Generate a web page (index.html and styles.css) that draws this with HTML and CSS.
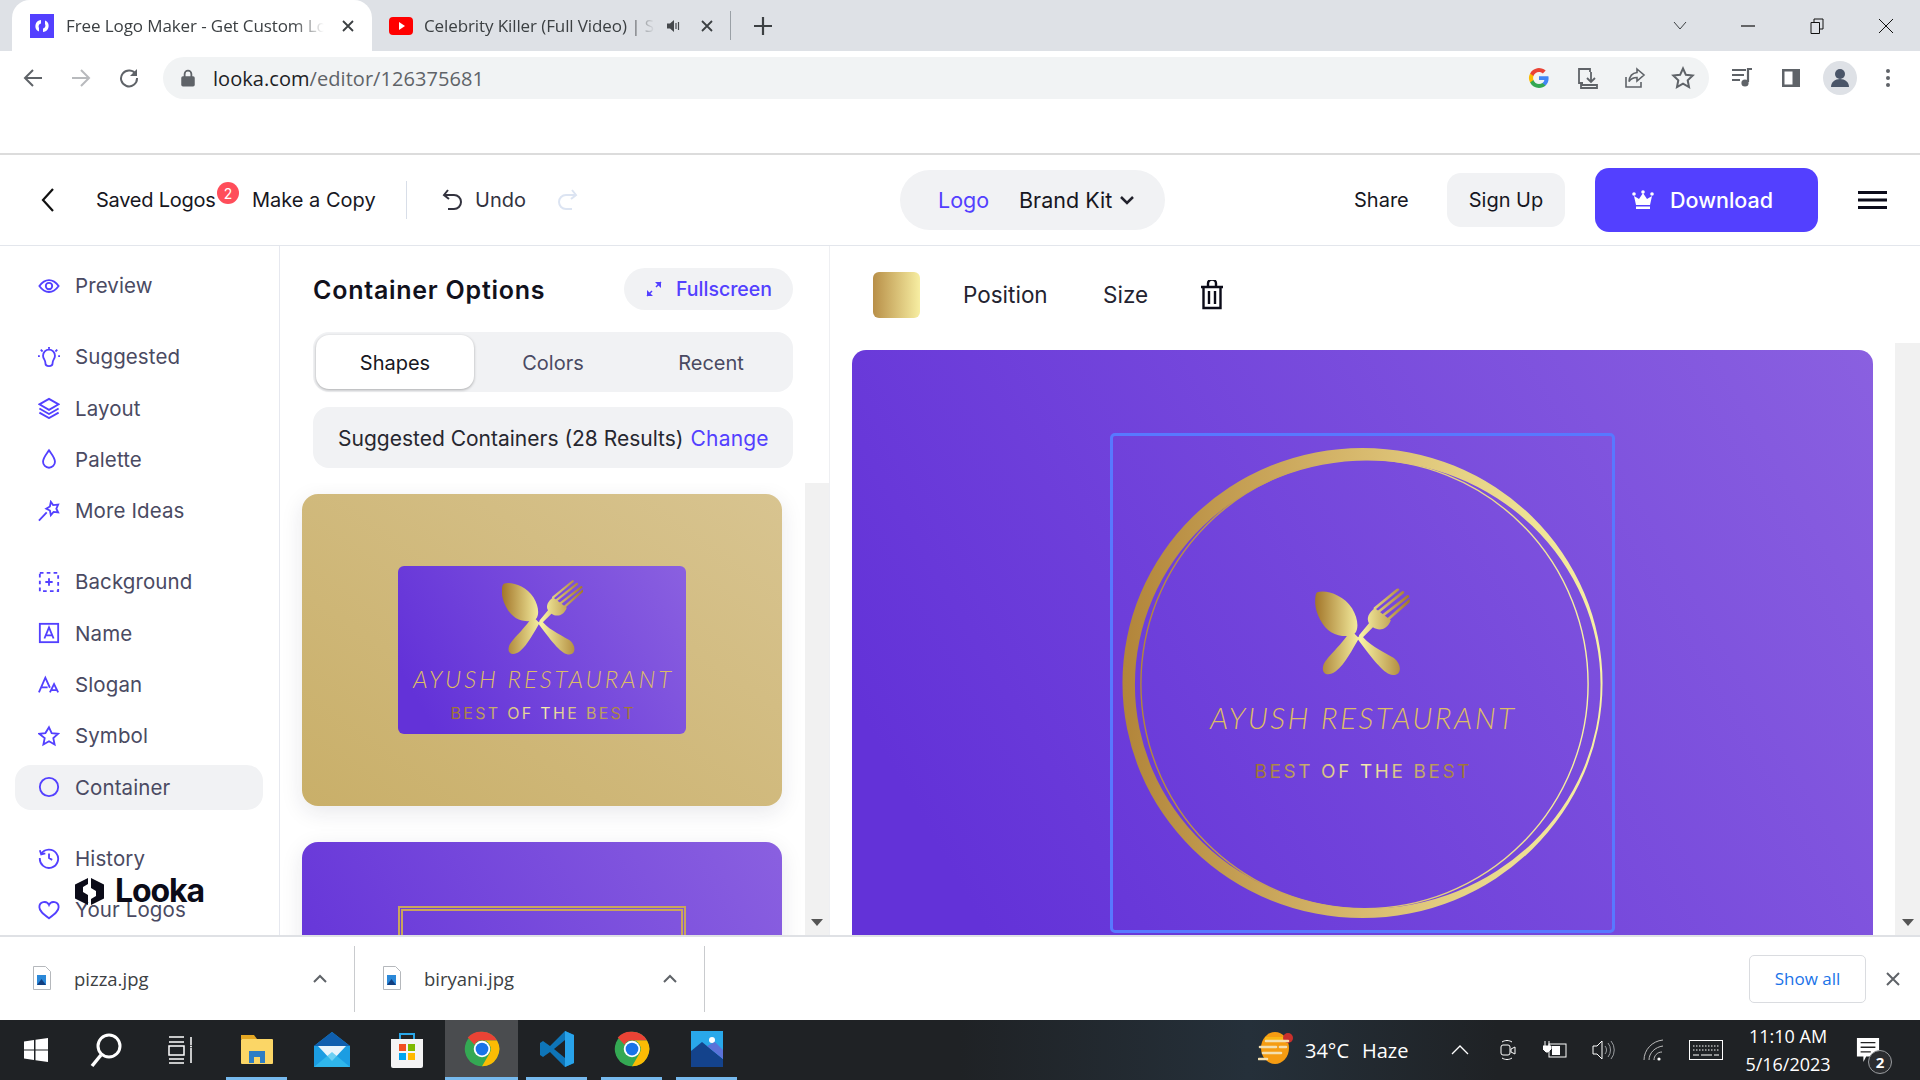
FILE: index.html
```html
<!DOCTYPE html>
<html lang="en">
<head>
<meta charset="utf-8">
<title>Free Logo Maker - Get Custom Logo Designs</title>
<link rel="stylesheet" href="styles.css">
</head>
<body>
<svg class="defs" width="0" height="0" aria-hidden="true">
  <defs>
    <linearGradient id="gold" gradientUnits="userSpaceOnUse" x1="0" y1="0" x2="95" y2="0">
      <stop offset="0" stop-color="#a3762a"/><stop offset=".48" stop-color="#f8f3a4"/><stop offset="1" stop-color="#a3762a"/>
    </linearGradient>
    <linearGradient id="ring" x1="0" y1="0" x2="1" y2="0">
      <stop offset="0" stop-color="#b2853a"/><stop offset=".5" stop-color="#d8ba6e"/><stop offset="1" stop-color="#f8f2a4"/>
    </linearGradient>
    <linearGradient id="slogan" x1="0" y1="0" x2="1" y2="0">
      <stop offset="0" stop-color="#9c7030"/><stop offset=".5" stop-color="#f8efb0"/><stop offset="1" stop-color="#9c7030"/>
    </linearGradient>
    <symbol id="cutlery" viewBox="0 0 95 87">
      <g fill="url(#gold)">
        <path d="M2 4C10 1 28 6 37 20c6 10 7 20 3 25-4 4-15 4-24-1C6 38-2 20 0 9c.5-3 1-4 2-5z"/>
        <path d="M36 42l8 8C38 60 30 76 21 83c-8 6-15 3-13-5 2-8 16-18 28-36z"/>
        <path d="M60 20c-6 4-9 10-6 15l-10 12 1 5 13-13c6 4 14 3 18-7z"/>
        <path d="M42 50l4-4C52 56 66 62 79 70c8 6 8 17 0 17-9 0-19-13-37-37z"/>
      </g>
      <g stroke="url(#gold)" stroke-width="2.600" stroke-linecap="round" fill="none">
        <path d="M60 20 83 1M63 24 88 4M67 28 93 8M71 33 95 12"/>
      </g>
    </symbol>
    <symbol id="chrome" viewBox="0 0 48 48">
      <circle cx="24" cy="24" r="23" fill="#34a853"/>
      <path d="M24 1a23 23 0 0 1 20 11.500H24a11.500 11.500 0 0 0-10 5.800L5 8.500A23 23 0 0 1 24 1z" fill="#ea4335"/>
      <path d="M44 12.500a23 23 0 0 1-20 34.500L34 30a11.500 11.500 0 0 0-10-17.500z" fill="#fbbc04"/>
      <circle cx="24" cy="24" r="11" fill="#fff"/><circle cx="24" cy="24" r="8.500" fill="#1a73e8"/>
    </symbol>
    <symbol id="file" viewBox="0 0 18 24">
      <path d="M.5.500h12l5 5v18H.5z" fill="#fff" stroke="#b5b8bc"/><rect x="4" y="9" width="9" height="10" fill="#2b88d8"/><path d="M4 19l4.500-6 4.500 6z" fill="#123f80"/>
    </symbol>
  </defs>
</svg>

<div class="tabstrip">
  <div class="tab tab-active">
    <svg class="fav" viewBox="0 0 24 24"><rect width="24" height="24" fill="#5340ff"/><path d="M11 6a6 6 0 0 0-2 11.500v-3.500a3 3 0 0 1 2-4.500zM13 18a6 6 0 0 0 2-11.500V10a3 3 0 0 1-2 4.500z" fill="#fff"/></svg>
    <span class="tab-title">Free Logo Maker - Get Custom Logo Designs</span>
    <svg class="tab-x" viewBox="0 0 12 12"><path d="M1 1l10 10M11 1 1 11" stroke="#3c4043" stroke-width="1.800"/></svg>
  </div>
  <div class="tab tab-second">
    <svg class="fav fav-yt" viewBox="0 0 24 18"><rect width="24" height="18" rx="4" fill="#f00"/><path d="M10 5l6 4-6 4z" fill="#fff"/></svg>
    <span class="tab-title tab-title-short">Celebrity Killer (Full Video) | Saga</span>
    <svg class="tab-sound" viewBox="0 0 16 14"><path d="M1 4.500h3L8 1v12L4 9.500H1z" fill="#45484c"/><path d="M10 4v6M12.500 3v8" stroke="#45484c" stroke-width="1.200"/></svg>
    <svg class="tab-x" viewBox="0 0 12 12"><path d="M1 1l10 10M11 1 1 11" stroke="#3c4043" stroke-width="1.800"/></svg>
  </div>
  <span class="tab-sep"></span>
  <svg class="tab-plus" viewBox="0 0 18 18"><path d="M9 0v18M0 9h18" stroke="#3c4043" stroke-width="2.200"/></svg>
  <div class="win-controls">
    <svg class="wc wc-chev" viewBox="0 0 14 10"><path d="M1 1l6 7 6-7" stroke="#3c4043" fill="none"/></svg>
    <svg class="wc" viewBox="0 0 16 16"><path d="M1 8h14" stroke="#111" stroke-width="1.200"/></svg>
    <svg class="wc" viewBox="0 0 16 16"><path d="M2 4.500h8.500v11H2zM5 4.500V1h9v10h-3.500" stroke="#111" fill="none"/></svg>
    <svg class="wc" viewBox="0 0 16 16"><path d="M1 1l14 14M15 1 1 15" stroke="#111"/></svg>
  </div>
</div>

<div class="toolbar">
  <svg class="nav-ic" viewBox="0 0 20 20"><path d="M19 10H2M10 2l-8 8 8 8" stroke="#5f6368" stroke-width="2" fill="none"/></svg>
  <svg class="nav-ic" viewBox="0 0 20 20"><path d="M1 10h17M10 2l8 8-8 8" stroke="#b8babd" stroke-width="2" fill="none"/></svg>
  <svg class="nav-ic" viewBox="0 0 20 20"><path d="M17 6.500A8 8 0 1 0 18 10" stroke="#5f6368" stroke-width="2" fill="none"/><path d="M18 1v7h-7z" fill="#5f6368"/></svg>
  <div class="omnibox">
    <svg class="lock" viewBox="0 0 12 16"><path d="M3 7V4.500a3 3 0 0 1 6 0V7" stroke="#5f6368" stroke-width="1.600" fill="none"/><rect y="6.500" width="12" height="9" rx="1.500" fill="#5f6368"/></svg>
    <span class="url"><b>looka.com</b>/editor/126375681</span>
    <span class="omni-fill"></span>
    <svg class="omni-ic" viewBox="0 0 24 24"><path d="M21.600 12.200c0-.7-.1-1.400-.2-2H12v3.800h5.400a4.600 4.600 0 0 1-2 3v2.500h3.200c1.900-1.700 3-4.300 3-7.300z" fill="#4285f4"/><path d="M12 22c2.700 0 5-.9 6.600-2.400l-3.200-2.500c-.9.600-2 1-3.400 1-2.600 0-4.800-1.800-5.600-4.100H3.100v2.600A10 10 0 0 0 12 22z" fill="#34a853"/><path d="M6.400 14a6 6 0 0 1 0-3.900V7.400H3.100a10 10 0 0 0 0 9.200z" fill="#fbbc04"/><path d="M12 6c1.500 0 2.800.5 3.800 1.500l2.900-2.900A10 10 0 0 0 3.100 7.400l3.300 2.600C7.200 7.800 9.400 6 12 6z" fill="#ea4335"/></svg>
    <svg class="omni-ic" viewBox="0 0 24 24"><path d="M8 17H4V3h11v3" stroke="#5f6368" stroke-width="1.800" fill="none"/><path d="M16 6v10M12 12l4 4 4-4M6 19h16v3H6z" stroke="#5f6368" stroke-width="1.800" fill="none"/></svg>
    <svg class="omni-ic" viewBox="0 0 24 24"><path d="M3 11v10h15v-5" stroke="#5f6368" stroke-width="1.600" fill="none"/><path d="M14 3l7 6-7 6v-3.500c-4 0-6 1-8 4 .5-5 3-8.500 8-9z" stroke="#5f6368" stroke-width="1.600" fill="none"/></svg>
    <svg class="omni-ic" viewBox="0 0 24 24"><path d="M12 2.500l2.900 6.300 6.800.8-5 4.700 1.300 6.800-6-3.400-6 3.400 1.300-6.800-5-4.700 6.800-.8z" stroke="#5f6368" stroke-width="2" fill="none"/></svg>
  </div>
  <div class="tool-right">
    <svg class="tr-ic" viewBox="0 0 24 24"><path d="M2 4h14M2 9h12M2 14h8" stroke="#5f6368" stroke-width="2.200"/><path d="M18 16V3h4" stroke="#5f6368" stroke-width="2.200" fill="none"/><circle cx="15" cy="17" r="3.600" fill="#5f6368"/></svg>
    <svg class="tr-ic" viewBox="0 0 24 24"><rect x="3" y="3" width="18" height="18" fill="#5f6368"/><rect x="5.500" y="5.500" width="8" height="13" fill="#fff"/></svg>
    <svg class="tr-ic tr-avatar" viewBox="0 0 34 34"><circle cx="17" cy="17" r="17" fill="#dee1e6"/><circle cx="17" cy="13" r="5" fill="#4a5568"/><path d="M8 26c0-5 4-8 9-8s9 3 9 8z" fill="#4a5568"/></svg>
    <svg class="tr-dots" viewBox="0 0 4 18"><circle cx="2" cy="2" r="2" fill="#5f6368"/><circle cx="2" cy="9" r="2" fill="#5f6368"/><circle cx="2" cy="16" r="2" fill="#5f6368"/></svg>
  </div>
</div>
<div class="bookmark-space"></div>

<header class="app-header">
  <svg class="back" viewBox="0 0 14 24"><path d="M12 1 2 12l10 11" stroke="#111" stroke-width="2.200" fill="none"/></svg>
  <span class="saved">Saved Logos<span class="badge">2</span></span>
  <span class="copy">Make a Copy</span>
  <span class="vdiv"></span>
  <svg class="undo" viewBox="0 0 22 22"><path d="M6 1 2 6l5 4M2 6h10a7 7 0 0 1 0 14H6" stroke="#33333f" stroke-width="2" fill="none"/></svg>
  <span class="undo-text">Undo</span>
  <svg class="redo" viewBox="0 0 22 22"><path d="M16 1l4 5-5 4M20 6H10a7 7 0 0 0 0 14h6" stroke="#dce4f2" stroke-width="2" fill="none"/></svg>
  <div class="modes">
    <span class="mode-logo">Logo</span>
    <span class="mode-brand">Brand Kit</span>
    <svg class="mode-chev" viewBox="0 0 14 9"><path d="M1 1l6 6 6-6" stroke="#22222c" stroke-width="2.500" fill="none"/></svg>
  </div>
  <span class="share">Share</span>
  <span class="signup">Sign Up</span>
  <span class="download">
    <svg class="crown" viewBox="0 0 22 20"><path d="M4 15 2 6l5 3 4-6 4 6 5-3-2 9z" fill="#fff"/><rect x="4" y="16.500" width="14" height="2.500" fill="#fff"/><circle cx="2" cy="4" r="1.800" fill="#fff"/><circle cx="11" cy="2" r="1.800" fill="#fff"/><circle cx="20" cy="4" r="1.800" fill="#fff"/></svg>
    Download
  </span>
  <svg class="burger" viewBox="0 0 29 18"><path d="M0 1.500h29M0 9h29M0 16.500h29" stroke="#0b0b1a" stroke-width="3"/></svg>
</header>

<main class="workspace">
  <nav class="sidebar">
    <a class="item"><svg class="ic" viewBox="0 0 24 24"><path d="M1.500 12C5 7 8 5.500 12 5.500S19 7 22.500 12C19 17 16 18.500 12 18.500S5 17 1.500 12z"/><circle cx="12" cy="12" r="3.500"/></svg>Preview</a>
    <a class="item group"><svg class="ic" viewBox="0 0 24 24"><path d="M8 18c0-3-2.500-4-2.500-7.500a6.500 6.500 0 0 1 13 0C18.500 14 16 15 16 18c0 3-2 4-4 4s-4-1-4-4zM12 1v2M3 4l2 2M21 4l-2 2M0 11h2M22 11h2"/></svg>Suggested</a>
    <a class="item"><svg class="ic" viewBox="0 0 24 24"><path d="M12 2 1.500 8 12 14l10.500-6zM1.500 12.500 12 18.500l10.500-6M1.500 17 12 23l10.500-6"/></svg>Layout</a>
    <a class="item"><svg class="ic" viewBox="0 0 24 24"><path d="M12 2.500c3 4.500 6.500 8 6.500 12.500a6.500 6.500 0 0 1-13 0C5.500 10.500 9 7 12 2.500z"/></svg>Palette</a>
    <a class="item"><svg class="ic" viewBox="0 0 24 24"><path d="M14 2l2.500 3.500 5.500-.5-2 4.500 2 4-5-.5-3 3.500-1-5-4-2 4-2.500zM9.500 13.500 1 22.500"/></svg>More Ideas</a>
    <a class="item group"><svg class="ic" viewBox="0 0 24 24"><rect x="2" y="2" width="20" height="20" stroke-dasharray="4 3.500"/><path d="M12 8v8M8 12h8"/></svg>Background</a>
    <a class="item"><svg class="ic" viewBox="0 0 24 24"><rect x="2" y="2" width="20" height="20"/><path d="M7 18 12 6l5 12M8.500 14.500h7"/></svg>Name</a>
    <a class="item"><svg class="ic" viewBox="0 0 24 24"><path d="M1 20 8 4l5 11M3.500 14.500h7M13 20l4.500-9 4.500 9M15 17.500h5"/></svg>Slogan</a>
    <a class="item"><svg class="ic" viewBox="0 0 24 24"><path d="M12 2.500l2.900 6.300 6.900.8-5.100 4.700 1.400 6.900-6.100-3.500-6.100 3.500 1.400-6.900L1.200 9.600l6.900-.8z"/></svg>Symbol</a>
    <a class="item item-on"><svg class="ic" viewBox="0 0 24 24"><circle cx="12" cy="12" r="10"/></svg>Container</a>
    <a class="item group"><svg class="ic" viewBox="0 0 24 24"><path d="M3.500 7.500A10 10 0 1 1 2 12M2 3.500l1.500 4.500 4.500-1M12 7v5l3.500 2"/></svg>History</a>
    <a class="item"><svg class="ic" viewBox="0 0 24 24"><path d="M12 21C5 16 1.500 13 1.500 9A5.500 5.500 0 0 1 12 6.500 5.500 5.500 0 0 1 22.500 9c0 4-3.500 7-10.500 12z"/></svg>Your Logos</a>
    <div class="brand">
      <svg class="brand-mark" viewBox="0 0 29 27"><path d="M13 0 0 6.500v14L13 27V17L8 14V9l5-3zM16 0l13 6.500v14L16 27v-6l5-3v-5l-5-3z" fill="#0b0b18"/></svg>
      <span>Looka</span>
    </div>
  </nav>

  <section class="panel">
    <div class="panel-head">
      <div class="title-row">
        <h2>Container Options</h2>
        <span class="fullscreen">
          <svg class="fs-ic" viewBox="0 0 16 16"><path d="M1 15l5-5M15 1l-5 5" stroke="#5340ff" stroke-width="1.500"/><path d="M1 9v6h6zM15 7V1H9z" fill="#5340ff"/></svg>
          Fullscreen
        </span>
      </div>
      <div class="seg">
        <span class="seg-on">Shapes</span><span>Colors</span><span>Recent</span>
      </div>
      <div class="suggest"><span>Suggested Containers (28 Results)</span><a>Change</a></div>
    </div>
    <div class="list-row">
      <div class="list">
        <div class="card card-gold">
          <div class="thumb">
            <svg class="thumb-art" viewBox="0 0 288 168">
              <use href="#cutlery" x="104" y="14" width="81" height="75"/>
              <text class="t-name" x="144" y="122" text-anchor="middle" textLength="258" fill="#dcbc66">AYUSH RESTAURANT</text>
              <text class="t-slogan" x="144" y="153" text-anchor="middle" textLength="183" fill="url(#slogan)">BEST OF THE BEST</text>
            </svg>
          </div>
        </div>
        <div class="card card-violet"><div class="frame"></div></div>
      </div>
      <div class="scroll"><svg class="arrow" viewBox="0 0 12 7"><path d="M0 0h12L6 7z" fill="#555"/></svg></div>
    </div>
  </section>

  <section class="stage">
    <div class="stage-tools">
      <span class="swatch"></span>
      <span class="st-pos">Position</span>
      <span class="st-size">Size</span>
      <svg class="trash" viewBox="0 0 24 30"><path d="M1 7h22M8 6V3.500a4 4 0 0 1 8 0V6M3.500 7v21h17V7M9 11v13M15 11v13" stroke="#0b0b18" stroke-width="2.400" fill="none"/></svg>
    </div>
    <div class="stage-row">
      <div class="canvas">
        <div class="selection">
          <svg class="art" viewBox="2 2 501 496">
            <path fill="url(#ring)" fill-rule="evenodd" d="M11.500 250a241 236 0 1 0 482 0a241 236 0 1 0-482 0zM24 251.500a233.750 225 0 1 1 467.500 0a233.750 225 0 1 1-467.500 0z"/>
            <ellipse cx="254.500" cy="251" rx="224.500" ry="225.500" fill="none" stroke="url(#ring)" stroke-width="1.400"/>
            <use href="#cutlery" x="205" y="155" width="95" height="87"/>
            <text class="n-name" x="252" y="296" text-anchor="middle" textLength="305" fill="#dcbc66">AYUSH RESTAURANT</text>
            <text class="n-slogan" x="252" y="345" text-anchor="middle" textLength="216" fill="url(#slogan)">BEST OF THE BEST</text>
          </svg>
        </div>
      </div>
      <div class="scroll scroll-right"><svg class="arrow" viewBox="0 0 12 7"><path d="M0 0h12L6 7z" fill="#555"/></svg></div>
    </div>
  </section>
</main>

<footer class="downloads">
  <div class="dl">
    <svg class="dl-file" viewBox="0 0 18 24"><use href="#file"/></svg>
    <span class="dl-name">pizza.jpg</span>
    <svg class="dl-caret" viewBox="0 0 14 9"><path d="M1 8l6-6 6 6" stroke="#5f6368" stroke-width="2" fill="none"/></svg>
  </div>
  <div class="dl">
    <svg class="dl-file" viewBox="0 0 18 24"><use href="#file"/></svg>
    <span class="dl-name">biryani.jpg</span>
    <svg class="dl-caret" viewBox="0 0 14 9"><path d="M1 8l6-6 6 6" stroke="#5f6368" stroke-width="2" fill="none"/></svg>
  </div>
  <span class="dl-fill"></span>
  <span class="showall">Show all</span>
  <svg class="dl-x" viewBox="0 0 14 14"><path d="M1 1l12 12M13 1 1 13" stroke="#5f6368" stroke-width="2"/></svg>
</footer>

<div class="taskbar">
  <span class="tb tb-win"><svg viewBox="0 0 24 24" class="tb-s24"><path d="M0 3.500 10 2v9.500H0zM11.500 1.800 24 0v11.500H11.500zM0 12.500h10V22L0 20.500zM11.500 12.500H24V24l-12.500-1.800z" fill="#fff"/></svg></span>
  <span class="tb tb-search"><svg viewBox="0 0 32 36" class="tb-s32"><circle cx="19" cy="14" r="11" stroke="#fff" stroke-width="3" fill="none"/><path d="M11 23 2 34" stroke="#fff" stroke-width="3.500"/></svg></span>
  <span class="tb tb-view"><svg viewBox="0 0 26 28" class="tb-s26"><path d="M1 1h15M1 6h15M1 10h15v9H1zM1 23h15M1 27h15M23 1v8M23 12v15" stroke="#fff" stroke-width="1.500" fill="none"/><circle cx="23" cy="10.500" r="1" fill="#fff"/></svg></span>
  <span class="tb tb-file tb-on"><svg viewBox="0 0 34 34" class="tb-s34"><path d="M1 3h13l3 4H1z" fill="#e5a823"/><rect x="1" y="7" width="32" height="25" rx="1" fill="#fbd666"/><path d="M9 31V19h16v12h-5v-6h-6v6z" fill="#2d7dc4"/></svg></span>
  <span class="tb tb-mail"><svg viewBox="0 0 36 36" class="tb-s36"><path d="M18 0 36 14v21H0V14z" fill="#1b9de2"/><path d="M18 0 36 14 18 14 0 14z" fill="#0f5fae"/><path d="M4 14h28L18 29z" fill="#e8f4fb"/><path d="M0 35 18 20l18 15z" fill="#38c0f0" opacity=".7"/></svg></span>
  <span class="tb tb-store"><svg viewBox="0 0 34 36" class="tb-s34"><path d="M10 7V2h14v5" stroke="#2aa7e8" stroke-width="2" fill="none"/><path d="M1 7h32v27a2 2 0 0 1-2 2H3a2 2 0 0 1-2-2z" fill="#f4f4f4"/><rect x="9" y="12" width="7" height="7" fill="#f25022"/><rect x="18" y="12" width="7" height="7" fill="#7fba00"/><rect x="9" y="21" width="7" height="7" fill="#00a4ef"/><rect x="18" y="21" width="7" height="7" fill="#ffb900"/></svg></span>
  <span class="tb tb-active"><svg viewBox="0 0 48 48" class="tb-s36"><use href="#chrome"/></svg></span>
  <span class="tb tb-code tb-on"><svg viewBox="0 0 36 36" class="tb-s36"><path d="M26 0 35 4v28l-9 4L11 21l-7 5-3-2v-12l3-2 7 5z" fill="#0e75b8"/><path d="M26 0 35 4v28l-9 4z" fill="#28a3ea"/><path d="M26 9 15 18l11 9z" fill="#1f2225"/></svg></span>
  <span class="tb tb-chrome2 tb-on"><svg viewBox="0 0 48 48" class="tb-s36"><use href="#chrome"/></svg></span>
  <span class="tb tb-photos tb-on"><svg viewBox="0 0 32 36" class="tb-s32"><rect width="32" height="36" fill="#29a8ea"/><circle cx="21" cy="9" r="3" fill="#fff"/><path d="M0 36V20l11-9 21 17v8z" fill="#14438c"/><path d="M16 15l8-4 8 8v9z" fill="#5b72d8"/></svg></span>
  <span class="tb-fill"></span>
  <svg class="weather" viewBox="0 0 36 32"><ellipse cx="17" cy="16" rx="14" ry="16" fill="#f59c12"/><path d="M7 5h20v5H7z" fill="#fbc815" opacity=".6"/><circle cx="30" cy="6" r="5" fill="#c9302c"/><path d="M8 9h22M2 15h16M22 15h6M5 21h18M1 27h8" stroke="#f3dfb0" stroke-width="2.600" stroke-linecap="round"/></svg>
  <span class="tb-temp">34°C</span>
  <span class="tb-haze">Haze</span>
  <svg class="tray tray-caret" viewBox="0 0 18 10"><path d="M1 9l8-8 8 8" stroke="#fff" stroke-width="1.300" fill="none"/></svg>
  <svg class="tray tray-meet" viewBox="0 0 18 22"><rect x="2" y="6" width="9" height="10" rx="2" stroke="#fff" fill="none"/><path d="M12 10l4-2v7l-4-2zM3 3c3-2 7-2 10 0M3 19c3 2 7 2 10 0" stroke="#fff" fill="none"/></svg>
  <svg class="tray tray-batt" viewBox="0 0 24 20"><rect x="6" y="4" width="17" height="13" stroke="#fff" fill="none"/><rect x="9" y="6" width="8" height="9" fill="#fff"/><path d="M2 1v5M6 1v5M0 6h8v3l-3 3H3L0 9z" fill="#fff" stroke="#fff"/></svg>
  <svg class="tray tray-vol" viewBox="0 0 24 22"><path d="M2 7h4l5-5v18l-5-5H2z" stroke="#fff" fill="none"/><path d="M14 7a6 6 0 0 1 0 8M17 4a11 11 0 0 1 0 14M20 2a14 14 0 0 1 0 18" stroke="#9a9da0" fill="none"/></svg>
  <svg class="tray tray-wifi" viewBox="0 0 22 22"><path d="M1 21C1 11 9 2 20 1M6 21c0-7 6-13 14-14M11 21c0-4 3-8 8-8" stroke="#bbb" fill="none"/><circle cx="16" cy="20" r="1.600" fill="#fff"/></svg>
  <svg class="tray tray-kb" viewBox="0 0 34 20"><rect x=".5" y=".5" width="33" height="19" stroke="#fff" fill="none"/><path d="M4 6h26M4 10h26" stroke="#fff" stroke-dasharray="1.500 1.500"/><path d="M4 15h6M12 15h11M25 15h5" stroke="#fff"/></svg>
  <div class="clock"><span>11:10 AM</span><span>5/16/2023</span></div>
  <div class="notify">
    <svg class="note" viewBox="0 0 26 28"><path d="M1 1h24v20H11l-3 6v-6H1z" fill="#fff"/><path d="M5 6h16M5 11h16M5 16h11" stroke="#222" stroke-width="1.500"/></svg>
    <span class="note-badge">2</span>
  </div>
</div>
</body>
</html>
```

FILE: styles.css
```css
* { box-sizing: border-box; }
html, body { margin: 0; padding: 0; }
body {
  width: 1920px; height: 1080px; overflow: hidden; display: flex; flex-direction: column;
  background: #fff; font-family: Inter, "Liberation Sans", sans-serif; color: #111;
}
.defs { flex: none; }
svg { display: block; flex: none; }

/* browser chrome */
.tabstrip { height: 51px; flex: none; background: #dee1e6; display: flex; align-items: center; padding-left: 12px; font-family: "Open Sans", sans-serif; font-size: 17px; color: #3c4043; }
.tab { height: 51px; display: flex; align-items: center; }
.tab-active { width: 360px; background: #fff; border-radius: 18px 18px 0 0; padding-left: 18px; }
.tab-second { width: 358px; padding-left: 17px; }
.fav { width: 24px; height: 24px; }
.fav-yt { height: 18px; }
.tab-title { width: 258px; margin-left: 12px; margin-right: 6px; white-space: nowrap; overflow: hidden; letter-spacing: -.1px; -webkit-mask-image: linear-gradient(90deg, #000 88%, transparent); mask-image: linear-gradient(90deg, #000 88%, transparent); }
.tab-title-short { width: 231px; margin-left: 11px; margin-right: 0; }
.tab-x { width: 12px; height: 12px; margin-left: 12px; }
.tab-second .tab-x { margin-left: 19px; }
.tab-sound { width: 16px; height: 14px; margin-left: 11px; }
.tab-sep { width: 1px; height: 29px; background: #9aa0a6; }
.tab-plus { width: 18px; height: 18px; margin-left: 23px; }
.win-controls { margin-left: auto; display: flex; align-items: center; margin-right: 26px; gap: 53px; }
.wc { width: 16px; height: 16px; }
.wc-chev { width: 14px; height: 10px; }

.toolbar { height: 51px; flex: none; background: #fff; display: flex; align-items: center; padding: 2px 0 0 23px; gap: 28px; font-family: "Open Sans", sans-serif; }
.nav-ic { width: 20px; height: 20px; }
.omnibox { height: 42px; width: 1546px; margin-left: -4px; background: #f1f3f4; border-radius: 21px; display: flex; align-items: center; padding: 0 14px 0 18px; font-size: 20px; color: #5f6368; }
.lock { width: 14px; height: 18px; }
.url { margin-left: 18px; padding-top: 1px; letter-spacing: .05px; }
.url b { font-weight: 400; color: #202124; }
.omni-fill { flex: 1; }
.omni-ic { width: 24px; height: 24px; margin-left: 24px; }
.tool-right { display: flex; align-items: center; margin-left: -7px; }
.tr-ic { width: 24px; height: 24px; margin-right: 25px; }
.tr-avatar { width: 34px; height: 34px; margin-right: 29px; margin-left: -5px; }
.tr-dots { width: 4px; height: 18px; }
.bookmark-space { height: 53px; flex: none; background: #fff; border-bottom: 2px solid #dcdcdc; }

/* app header */
.app-header { height: 91px; flex: none; display: flex; align-items: center; border-bottom: 1px solid #e3e6ec; font-size: 20px; color: #171722; padding-left: 41px; }
.back { width: 14px; height: 24px; }
.saved { margin-left: 41px; position: relative; width: 119px; white-space: nowrap; letter-spacing: -.25px; }
.badge { position: absolute; left: 121px; top: -6px; width: 22px; height: 22px; border-radius: 50%; background: #ff4d5a; color: #fff; font-size: 14px; letter-spacing: 0; display: flex; align-items: center; justify-content: center; }
.copy { margin-left: 37px; width: 123px; white-space: nowrap; }
.vdiv { width: 1px; height: 38px; background: #d8dee8; margin-left: 31px; }
.undo { width: 22px; height: 22px; margin-left: 35px; }
.undo-text { margin-left: 11px; width: 49px; color: #33333f; }
.redo { width: 22px; height: 22px; margin-left: 32px; }
.modes { width: 265px; height: 60px; margin-left: 322px; border-radius: 30px; background: #f1f2f4; display: flex; align-items: center; padding-left: 38px; font-size: 21.500px; }
.mode-logo { color: #5340ff; width: 50px; }
.mode-brand { margin-left: 31px; width: 94px; white-space: nowrap; }
.mode-chev { width: 14px; height: 9px; margin-left: 7px; }
.share { margin-left: 189px; width: 53px; }
.signup { margin-left: 40px; width: 118px; height: 54px; background: #f1f2f4; border-radius: 14px; display: flex; align-items: center; justify-content: center; }
.download { margin-left: 30px; width: 223px; height: 64px; background: #5340ff; color: #fff; border-radius: 14px; display: flex; align-items: center; padding-left: 37px; gap: 16px; font-size: 21.500px; font-weight: 500; }
.crown { width: 22px; height: 20px; }
.burger { width: 29px; height: 18px; margin-left: 40px; }

/* workspace */
.workspace { flex: 1; min-height: 0; display: flex; overflow: hidden; }
.sidebar { width: 280px; flex: none; border-right: 1px solid #e6e8ef; padding: 17px 16px 0 15px; display: flex; flex-direction: column; gap: 6.300px; position: relative; overflow: hidden; }
.item { height: 45px; flex: none; display: flex; align-items: center; gap: 15px; padding-left: 23px; border-radius: 16px; font-size: 20.500px; color: #4a4a62; letter-spacing: .1px; }
.item.group { margin-top: 20px; }
.item-on { background: #f1f2f4; }
.ic { width: 22px; height: 22px; fill: none; stroke: #5340ff; stroke-width: 2; }
.brand { position: absolute; left: 75px; top: 629px; display: flex; align-items: center; gap: 11px; font-weight: 700; font-size: 32px; color: #0b0b18; letter-spacing: -1.100px; line-height: 32px; }
.brand-mark { width: 29px; height: 27px; }

.panel { width: 550px; flex: none; border-right: 1px solid #eeeff2; display: flex; flex-direction: column; min-height: 0; }
.panel-head { padding: 22px 36px 15px 33px; flex: none; }
.title-row { height: 42px; display: flex; align-items: center; justify-content: space-between; }
h2 { margin: 0; padding-top: 2px; font-size: 25px; font-weight: 600; color: #11111c; letter-spacing: .75px; }
.fullscreen { width: 169px; height: 42px; border-radius: 21px; background: #f1f2f4; display: flex; align-items: center; padding-left: 22px; gap: 14px; color: #5340ff; font-size: 19.500px; font-weight: 500; }
.fs-ic { width: 16px; height: 16px; }
.seg { height: 60px; margin-top: 22px; background: #f1f2f4; border-radius: 16px; display: grid; grid-template-columns: repeat(3, 1fr); align-items: center; padding: 3px; font-size: 20px; color: #4a4a62; text-align: center; }
.seg span { height: 54px; line-height: 56px; }
.seg .seg-on { background: #fff; color: #171722; border-radius: 13px; box-shadow: 0 1px 3px rgba(0,0,0,.3); }
.suggest { height: 61px; margin-top: 15px; background: #f1f2f4; border-radius: 16px; display: flex; align-items: center; padding: 2px 0 0 25px; font-size: 21px; color: #27272f; gap: 7px; white-space: nowrap; }
.suggest a { color: #5340ff; letter-spacing: .2px; }
.list-row { flex: 1; min-height: 0; display: flex; }
.list { flex: 1; overflow: hidden; padding: 11px 0 0 22px; display: flex; flex-direction: column; gap: 36px; }
.card { width: 480px; height: 312px; flex: none; border-radius: 16px; padding-top: 72px; display: flex; justify-content: center; box-shadow: 0 6px 22px rgba(30,30,60,.1); }
.card-gold { background: linear-gradient(35deg, #c9af69, #d8c490); }
.card-violet { padding-top: 64px; }
.card-violet, .thumb, .canvas { background: linear-gradient(60deg, #6332d8 10%, #8a60e0 100%); }
.thumb { width: 288px; height: 168px; border-radius: 6px; }
.thumb-art { width: 288px; height: 168px; }
.frame { width: 288px; height: 200px; border: 5px double #c9a55c; }
.t-name { font-family: Lato, sans-serif; font-style: italic; font-weight: 300; font-size: 24px; }
.t-slogan { font-family: Inter, sans-serif; font-weight: 400; font-size: 16px; }
.scroll { width: 24px; flex: none; background: #f1f1f1; display: flex; align-items: flex-end; justify-content: center; padding-bottom: 9px; }
.scroll-right { width: 25px; }
.arrow { width: 12px; height: 7px; }

.stage { flex: 1; min-width: 0; display: flex; flex-direction: column; }
.stage-tools { height: 97px; flex: none; display: flex; align-items: center; padding: 0 0 0 43px; font-size: 22.500px; color: #232330; }
.swatch { width: 47px; height: 46px; border-radius: 6px; background: linear-gradient(90deg, #b88f48, #f7eea2); }
.st-pos { margin-left: 43px; width: 85px; }
.st-size { margin-left: 55px; width: 44px; }
.trash { width: 24px; height: 30px; margin-left: 53px; }
.stage-row { flex: 1; min-height: 0; display: flex; justify-content: flex-end; }
.canvas { width: 1021px; margin: 7px 22px 0 0; border-radius: 14px 14px 0 0; display: flex; justify-content: center; padding-top: 83px; overflow: hidden; }
.selection { width: 505px; height: 500px; flex: none; border: 3px solid #5878ff; border-radius: 5px; overflow: hidden; }
.art { width: 499px; height: 494px; }
.n-name { font-family: Lato, sans-serif; font-style: italic; font-weight: 300; font-size: 30px; }
.n-slogan { font-family: Inter, sans-serif; font-weight: 400; font-size: 19px; }

/* downloads */
.downloads { height: 85px; flex: none; display: flex; align-items: center; background: #fff; border-top: 2px solid #dfe1e5; font-family: "Open Sans", sans-serif; color: #3c4043; font-size: 18.500px; }
.dl { width: 350px; height: 66px; display: flex; align-items: center; border-right: 1px solid #c9cbce; padding-left: 33px; }
.dl:first-child { width: 355px; }
.dl + .dl { padding-left: 28px; }
.dl-file { width: 18px; height: 24px; margin-top: -2px; }
.dl-name { margin-left: 23px; width: 210px; }
.dl-caret { width: 14px; height: 9px; margin-left: 29px; }
.dl-fill { flex: 1; }
.showall { width: 117px; height: 48px; border: 1px solid #dadce0; border-radius: 5px; display: flex; align-items: center; justify-content: center; color: #1a73e8; font-size: 17px; font-weight: 500; }
.dl-x { width: 14px; height: 14px; margin: 0 20px; }

/* taskbar */
.taskbar { height: 60px; flex: none; display: flex; align-items: center; background: linear-gradient(90deg, #1f2225 0, #1f2225 50%, #25303a 65%, #1f2225 78%); color: #fff; font-family: "Open Sans", sans-serif; font-size: 20px; }
.tb { width: 61px; height: 60px; display: flex; align-items: center; justify-content: center; flex: none; }
.tb-win { width: 72px; }
.tb-search { width: 70px; margin-left: -1px; }
.tb-view { width: 76px; margin: 0 7px 0 2px; }
.tb-mail, .tb-store { margin-left: 14px; }
.tb-active { width: 73px; background: #4a4c4f; border-bottom: 3px solid #76b9ed; margin-left: 8px; }
.tb-code { margin-left: 8px; }
.tb-chrome2, .tb-photos { margin-left: 14px; }
.tb-on { border-bottom: 3px solid #76b9ed; }
.tb-s24 { width: 24px; height: 24px; }
.tb-s32 { width: 32px; height: 36px; }
.tb-s26 { width: 26px; height: 28px; }
.tb-s34 { width: 34px; height: 36px; }
.tb-s36 { width: 36px; height: 36px; }
.tb-fill { flex: 1; }
.weather { width: 36px; height: 32px; margin-right: 11px; margin-top: -4px; }
.tb-temp { width: 45px; white-space: nowrap; }
.tb-haze { margin-left: 12px; width: 45px; white-space: nowrap; }
.tray { flex: none; }
.tray-caret { width: 18px; height: 10px; margin-left: 44px; }
.tray-meet { width: 18px; height: 22px; margin-left: 30px; }
.tray-batt { width: 24px; height: 20px; margin-left: 26px; }
.tray-vol { width: 24px; height: 22px; margin-left: 24px; }
.tray-wifi { width: 22px; height: 22px; margin-left: 28px; }
.tray-kb { width: 34px; height: 20px; margin-left: 24px; }
.clock { width: 110px; margin-left: 10px; display: flex; flex-direction: column; align-items: center; gap: 4px; font-size: 18px; line-height: 24px; }
.notify { width: 77px; height: 60px; position: relative; display: flex; align-items: center; justify-content: center; }
.note { width: 24px; height: 26px; margin-left: -28px; }
.note-badge { position: absolute; left: 25px; top: 30px; width: 24px; height: 24px; border-radius: 50%; background: #2b2d30; border: 1px solid #9a9da0; font-size: 15px; font-weight: 700; display: flex; align-items: center; justify-content: center; }
```
